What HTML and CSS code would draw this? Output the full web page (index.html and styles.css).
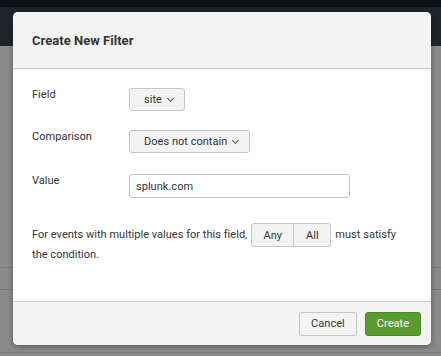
FILE: index.html
```html
<!DOCTYPE html>
<html lang="en">
<head>
    <meta charset="UTF-8">
    <meta name="viewport" content="width=device-width, initial-scale=1.0">
    <title>Create New Filter</title>
    <link rel="stylesheet" href="styles.css">
</head>
<body>
<div class="app">
    <div class="topbar"></div>
    <div class="navbar"></div>
    <div class="page">
        <div class="page-row"></div>
        <div class="page-row tall"></div>
        <div class="page-row"></div>
    </div>
</div>

<div class="modal">
    <div class="modal-header">
        <h2>Create New Filter</h2>
    </div>

    <div class="modal-body">
        <div class="form-row">
            <label>Field</label>
            <button class="dropdown">site <span class="caret"></span></button>
        </div>
        <div class="form-row">
            <label>Comparison</label>
            <button class="dropdown">Does not contain <span class="caret"></span></button>
        </div>
        <div class="form-row">
            <label>Value</label>
            <input class="text-input" type="text" value="splunk.com">
        </div>

        <div class="multi">
            <div class="multi-line">
                <span>For events with multiple values for this field,</span>
                <div class="btn-group"><button class="seg">Any</button><button class="seg">All</button></div>
                <span>must satisfy</span>
            </div>
            <div class="multi-end">the condition.</div>
        </div>
    </div>

    <div class="modal-footer">
        <button class="btn">Cancel</button>
        <button class="btn primary">Create</button>
    </div>
</div>
</body>
</html>
```

FILE: styles.css
```css
* {
    box-sizing: border-box;
}

body {
    margin: 0;
    font-family: Roboto, "Liberation Sans", Arial, sans-serif;
    font-size: 11px;
    letter-spacing: 0.03px;
    color: #333;
    background-color: #8b8b8b;
}

.app {
    height: 356px;
    overflow: hidden;
}

.topbar {
    height: 7px;
    background-color: #0d1115;
}
.navbar {
    height: 39px;
    background-color: #1f252b;
}
.page {
    padding-top: 221px;
}
.page-row {
    height: 22px;
    border-top: 1px solid #7a7a7a;
}
.page-row.tall {
    height: 63px;
}

/* modal */
.modal {
    position: absolute;
    left: 13px;
    top: 12px;
    width: 418px;
    height: 333px;
    background-color: #fff;
    border-radius: 5px;
    box-shadow: 0 2px 6px rgba(0, 0, 0, 0.35);
    display: flex;
    flex-direction: column;
    overflow: hidden;
}

.modal-header {
    height: 57px;
    background-color: #f3f3f3;
    border-bottom: 1px solid #cbcbcb;
    padding: 0 19px;
    display: flex;
    align-items: center;
}
.modal-header h2 {
    margin: 0;
    font-size: 13px;
    font-weight: bold;
    color: #333;
}

.modal-body {
    flex: 1;
    padding: 19px 19px 0;
}

.form-row {
    display: flex;
    align-items: flex-start;
    margin-bottom: 19px;
}
.form-row:nth-child(2) {
    margin-bottom: 21px;
}
.form-row label {
    width: 97px;
    line-height: 13px;
}

.dropdown {
    height: 23px;
    padding: 0 11px 0 14px;
    font-family: inherit;
    font-size: 11px;
    letter-spacing: inherit;
    color: #333;
    background-color: #f3f3f3;
    border: 1px solid #c6c6c6;
    border-radius: 3px;
    display: flex;
    align-items: center;
    gap: 6px;
}
.caret {
    width: 5px;
    height: 5px;
    border-right: 1px solid #555;
    border-bottom: 1px solid #555;
    transform: rotate(45deg);
    margin-top: -3px;
}

.text-input {
    width: 221px;
    height: 24px;
    padding: 0 6px;
    font-family: inherit;
    font-size: 11px;
    letter-spacing: inherit;
    color: #333;
    border: 1px solid #c6c6c6;
    border-radius: 3px;
}

.multi {
    margin-top: 25px;
}
.multi-line {
    display: flex;
    align-items: center;
    gap: 4px;
    line-height: 14px;
}
.multi-end {
    margin-top: 1px;
    line-height: 14px;
}
.btn-group {
    display: flex;
}
.seg {
    height: 24px;
    font-family: inherit;
    font-size: 11px;
    letter-spacing: inherit;
    color: #333;
    background-color: #f3f3f3;
    border: 1px solid #c6c6c6;
}
.seg:first-child {
    border-radius: 3px 0 0 3px;
    width: 43px;
}
.seg:last-child {
    border-left: none;
    border-radius: 0 3px 3px 0;
    width: 37px;
}

.modal-footer {
    height: 44px;
    background-color: #f3f3f3;
    border-top: 1px solid #cbcbcb;
    padding: 0 10px;
    display: flex;
    justify-content: flex-end;
    align-items: center;
    gap: 8px;
}
.btn {
    height: 24px;
    padding: 0 11px;
    font-family: inherit;
    font-size: 11px;
    letter-spacing: inherit;
    color: #333;
    background-color: #f3f3f3;
    border: 1px solid #c6c6c6;
    border-radius: 3px;
}
.btn.primary {
    color: #fff;
    background-color: #5a9b2f;
    border-color: #4d8a26;
}
```
